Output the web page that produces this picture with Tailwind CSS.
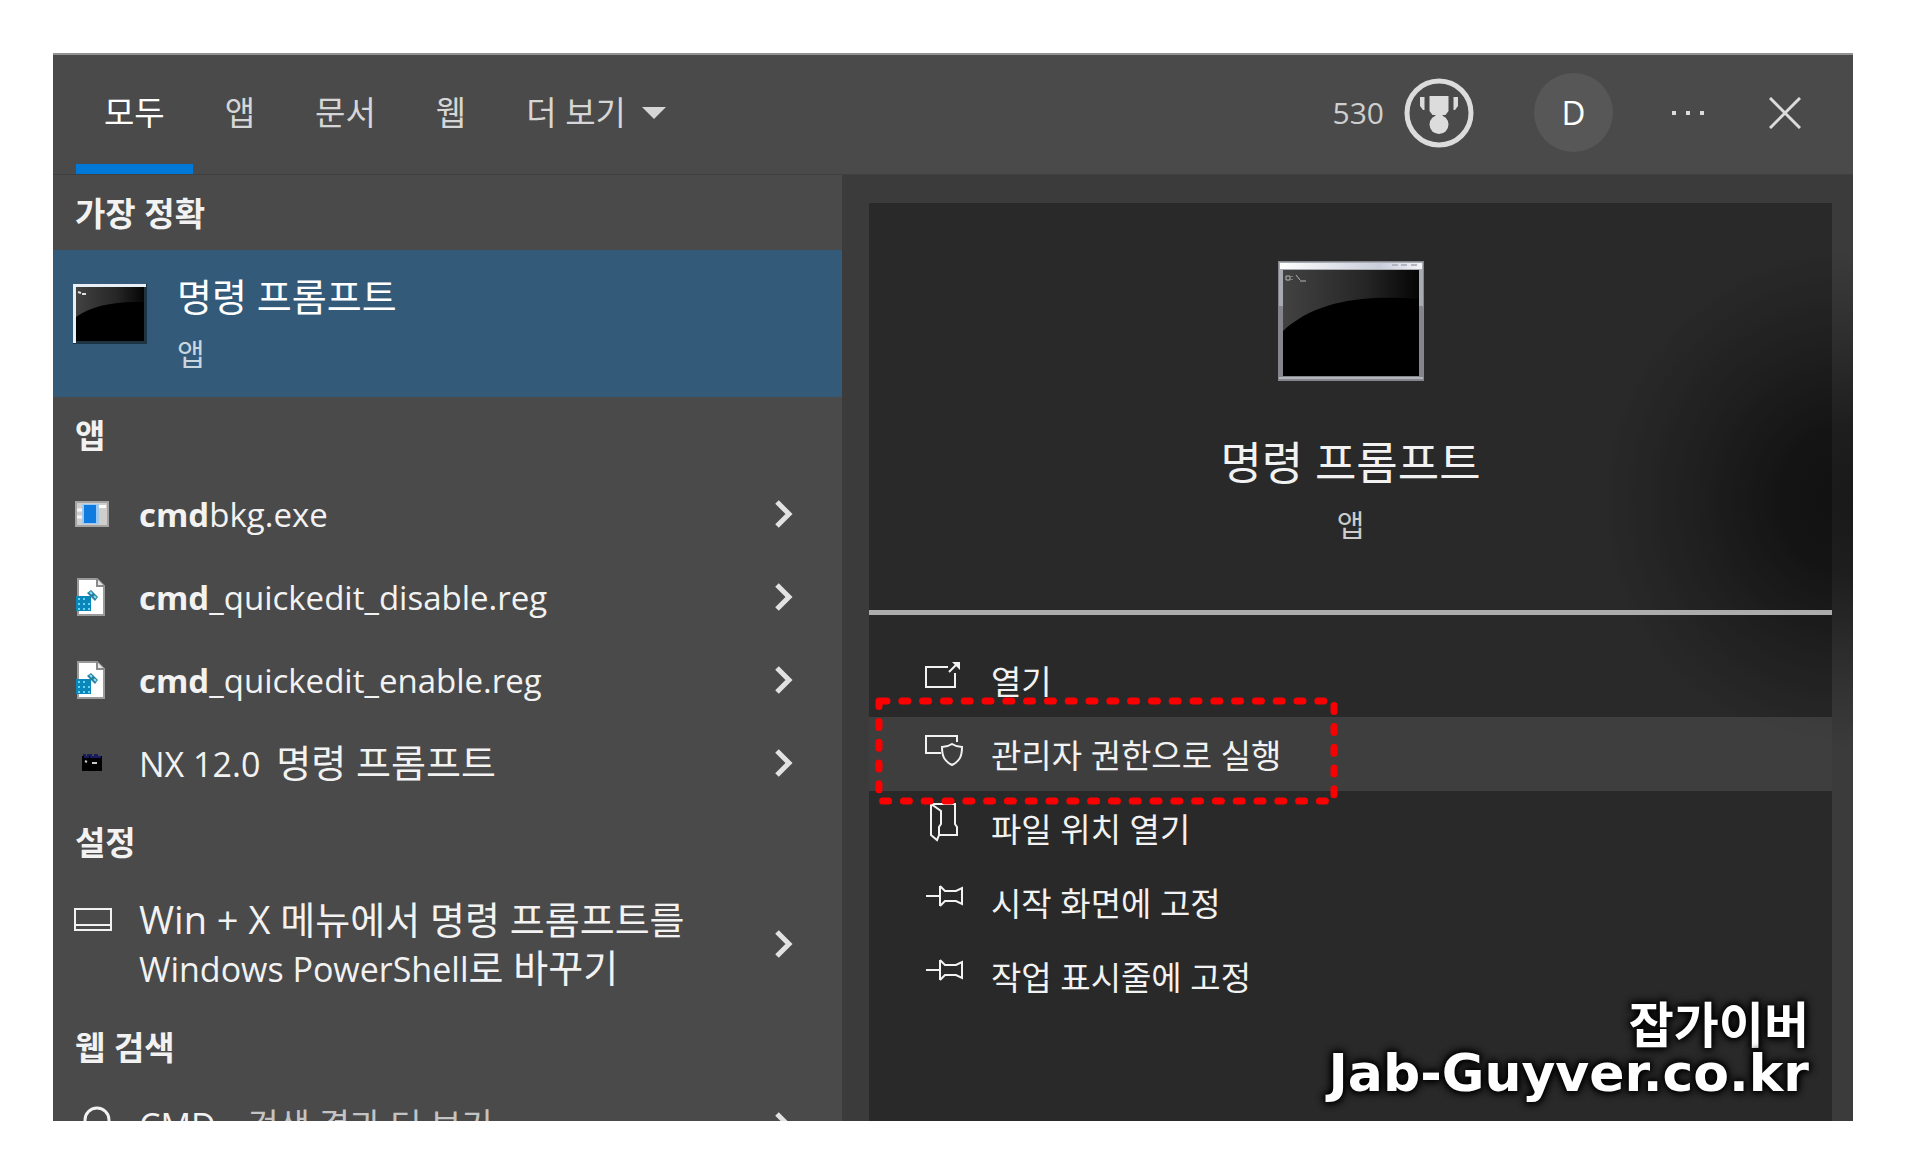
<!DOCTYPE html>
<html lang="ko">
<head>
    <meta charset="UTF-8">
    <meta name="viewport" content="width=device-width, initial-scale=1.0">
    <title>명령 프롬프트 - 검색</title>
    <script src="https://cdn.jsdelivr.net/npm/@tailwindcss/browser@4"></script>
    <style>
        body {
            font-family: 'Open Sans', 'Noto Sans CJK KR', sans-serif;
        }
        .watermark {
            font-family: 'DejaVu Sans', 'Noto Sans CJK KR', sans-serif;
            text-shadow: 0 0 6px #000, 0 0 8px #000, 0 0 10px #000;
        }
    </style>
</head>
<body class="bg-white h-screen p-[53px]">
    <div class="relative flex flex-col h-full overflow-hidden bg-[#4a4a4a] text-[#f2f2f2] border-t-2 border-[#929292]">

        <!-- 상단 탭 -->
        <header class="flex items-stretch justify-between h-[120px] shrink-0 border-b border-[#3f3f3f]">
            <nav class="flex gap-1 pl-[23px] text-[33px] text-[#d6d6d6]">
                <a href="#" class="flex items-center px-7 pt-1.5 border-b-10 border-[#0078d7] text-white">모두</a>
                <a href="#" class="flex items-center px-7 pt-1.5 border-b-10 border-transparent">앱</a>
                <a href="#" class="flex items-center px-7 pt-1.5 border-b-10 border-transparent">문서</a>
                <a href="#" class="flex items-center px-7 pt-1.5 border-b-10 border-transparent">웹</a>
                <button type="button" class="flex items-center gap-4 px-7 pt-1.5 border-b-10 border-transparent">
                    더 보기
                    <svg class="w-6 h-3" viewBox="0 0 24 12" fill="currentColor"><path d="M0 0h24L12 12z"/></svg>
                </button>
            </nav>
            <div class="flex items-center pb-1 pr-[52px] text-[#dcdcdc]">
                <span class="text-[30px] text-[#cfcfcf]">530</span>
                <button type="button" aria-label="리워드" class="ml-5">
                    <svg class="size-[70px]" viewBox="0 0 70 70" fill="currentColor">
                        <circle cx="35" cy="35" r="32" fill="none" stroke="currentColor" stroke-width="5"/>
                        <path d="M25.500 18h19v15l-3 4h-3v2h-7v-2h-3l-3-4z"/>
                        <circle cx="35" cy="46.500" r="9.500"/>
                        <path d="M16 19h4.500v13H19l-3-4zM49.500 19H54v9l-3 4h-1.500z"/>
                    </svg>
                </button>
                <button type="button" class="flex items-center justify-center ml-[60px] size-[79px] rounded-full bg-[#575757] text-[33px] text-white">D</button>
                <button type="button" aria-label="옵션" class="ml-[58px]">
                    <svg class="w-9 h-2" viewBox="0 0 36 8" fill="currentColor"><path d="M1 2h4v4H1zM15 2h4v4h-4zM29 2h4v4h-4z"/></svg>
                </button>
                <button type="button" aria-label="닫기" class="ml-[62px]">
                    <svg class="size-8" viewBox="0 0 32 32" fill="none" stroke="currentColor" stroke-width="3"><path d="M1 1l30 30M31 1L1 31"/></svg>
                </button>
            </div>
        </header>

        <div class="grid grid-cols-[789fr_1011fr] grow min-h-0">

            <!-- 검색 결과 목록 -->
            <section class="min-w-0">
                <h2 class="flex items-center h-[75px] px-[22px] pt-0.5 text-[33px] font-bold">가장 정확</h2>
                <a href="#" class="flex items-center gap-[30px] h-[147px] px-5 bg-[#335a78]">
                    <svg class="w-[74px] h-[60px] mb-5" viewBox="0 0 74 60">
                        <path d="M0 0h74v60H0z" fill="#1f3442"/>
                        <path d="M0 0h73v3H3v56H0z" fill="#e9eff4"/>
                        <path d="M3 3h68v54H3z" fill="#000"/>
                        <path d="M3 3h68v15C40 17 18 22 3 33z" fill="url(#gloss)"/>
                        <path d="M5 8l3 1m1 1h4" stroke="#ddd" stroke-width="2"/>
                    </svg>
                    <span class="flex flex-col gap-3">
                        <span class="text-[38px] leading-12 text-white">명령 프롬프트</span>
                        <span class="text-[30px] leading-11 text-[#c9d6e0]">앱</span>
                    </span>
                </a>

                <h2 class="flex items-center h-[75px] px-[22px] pt-0.5 text-[33px] font-bold">앱</h2>
                <ul class="text-[33px]">
                    <li>
                        <a href="#" class="flex items-center h-[83px] pl-[22px] pr-12">
                            <span class="w-16 shrink-0">
                                <svg class="w-[34px] h-[26px]" viewBox="0 0 34 26">
                                    <path d="M1 1h32v24H1z" fill="#d0cecb" stroke="#a3a3a3" stroke-width="2"/>
                                    <path d="M2 9h6M2 16h6" stroke="#f5f5f5" stroke-width="3"/>
                                    <path d="M7 3h17v20H7z" fill="#9cc9f2"/>
                                    <path d="M9 4h12v18H9z" fill="#0f7be0"/>
                                    <path d="M24 4h7v3h-7z" fill="#fff"/>
                                </svg>
                            </span>
                            <span class="grow pt-0.5"><b>cmd</b>bkg.exe</span>
                            <svg class="w-5 h-7" viewBox="0 0 20 28" fill="none" stroke="#e2e2e2" stroke-width="5"><path d="M3 2l12 12L3 26"/></svg>
                        </a>
                    </li>
                    <li>
                        <a href="#" class="flex items-center h-[83px] pl-[22px] pr-12">
                            <span class="w-16 shrink-0">
                                <svg class="w-[34px] h-[38px]" viewBox="0 0 34 38">
                                    <path d="M3 1h19l7 7v29H3z" fill="#fff" stroke="#9a9a9a" stroke-width="2"/>
                                    <path d="M22 1v7h7" fill="#e8e8e8" stroke="#8a8a8a" stroke-width="2"/>
                                    <path d="M1 18h15v15H1z" fill="#0a86b8"/>
                                    <path d="M3 20h2v2H3zM8 20h2v2H8zM3 25h2v2H3zM8 25h2v2H8zM13 25h2v2h-2zM3 30h2v2H3zM8 30h2v2H8zM13 30h2v2h-2z" fill="#5fd6f5"/>
                                    <path d="M12 15l4-3 7 7-3 4z" fill="#2b7f9e"/>
                                    <path d="M15 14l2 2M19 18l2 2" stroke="#7fe0f5" stroke-width="2"/>
                                </svg>
                            </span>
                            <span class="grow pt-0.5"><b>cmd</b>_quickedit_disable.reg</span>
                            <svg class="w-5 h-7" viewBox="0 0 20 28" fill="none" stroke="#e2e2e2" stroke-width="5"><path d="M3 2l12 12L3 26"/></svg>
                        </a>
                    </li>
                    <li>
                        <a href="#" class="flex items-center h-[83px] pl-[22px] pr-12">
                            <span class="w-16 shrink-0">
                                <svg class="w-[34px] h-[38px]" viewBox="0 0 34 38">
                                    <path d="M3 1h19l7 7v29H3z" fill="#fff" stroke="#9a9a9a" stroke-width="2"/>
                                    <path d="M22 1v7h7" fill="#e8e8e8" stroke="#8a8a8a" stroke-width="2"/>
                                    <path d="M1 18h15v15H1z" fill="#0a86b8"/>
                                    <path d="M3 20h2v2H3zM8 20h2v2H8zM3 25h2v2H3zM8 25h2v2H8zM13 25h2v2h-2zM3 30h2v2H3zM8 30h2v2H8zM13 30h2v2h-2z" fill="#5fd6f5"/>
                                    <path d="M12 15l4-3 7 7-3 4z" fill="#2b7f9e"/>
                                    <path d="M15 14l2 2M19 18l2 2" stroke="#7fe0f5" stroke-width="2"/>
                                </svg>
                            </span>
                            <span class="grow pt-0.5"><b>cmd</b>_quickedit_enable.reg</span>
                            <svg class="w-5 h-7" viewBox="0 0 20 28" fill="none" stroke="#e2e2e2" stroke-width="5"><path d="M3 2l12 12L3 26"/></svg>
                        </a>
                    </li>
                    <li>
                        <a href="#" class="flex items-center h-[83px] pl-[22px] pr-12">
                            <span class="w-16 shrink-0">
                                <svg class="w-[34px] h-[18px]" viewBox="0 0 34 18">
                                    <path d="M7 2h20v15H7z" fill="#000"/>
                                    <path d="M8 1h2v2h3V1h3v2h4V1h2v2h4" fill="none" stroke="#1a1a5e" stroke-width="2"/>
                                    <path d="M10 7l2 1M17 9h5" stroke="#c8c8c8" stroke-width="2"/>
                                </svg>
                            </span>
                            <span class="flex items-baseline gap-4 grow text-[34px]">NX 12.0 <span class="text-[38px]">명령 프롬프트</span></span>
                            <svg class="w-5 h-7" viewBox="0 0 20 28" fill="none" stroke="#e2e2e2" stroke-width="5"><path d="M3 2l12 12L3 26"/></svg>
                        </a>
                    </li>
                </ul>

                <h2 class="flex items-center h-[75px] px-[22px] pt-0.5 text-[33px] font-bold">설정</h2>
                <a href="#" class="flex items-center h-[130px] pl-5 pr-12">
                    <span class="w-[66px] shrink-0 pb-12">
                        <svg class="w-10 h-6" viewBox="0 0 40 24" fill="none" stroke="currentColor" stroke-width="2"><path d="M2 1h36v21H2zM2 17h36"/></svg>
                    </span>
                    <span class="grow text-[38px] leading-12">Win + X 메뉴에서 명령 프롬프트를<br><span class="text-[34px]">Windows PowerShell</span>로 바꾸기</span>
                    <svg class="w-5 h-7" viewBox="0 0 20 28" fill="none" stroke="#e2e2e2" stroke-width="5"><path d="M3 2l12 12L3 26"/></svg>
                </a>

                <h2 class="flex items-center h-[75px] px-[22px] pt-0.5 text-[33px] font-bold">웹 검색</h2>
                <a href="#" class="flex items-center h-[83px] pl-[22px] pr-12 text-[34px]">
                    <span class="w-16 shrink-0">
                        <svg class="w-9 h-10" viewBox="0 0 36 40" fill="none" stroke="currentColor" stroke-width="3"><circle cx="22" cy="14" r="12"/><path d="M14 23L2 37"/></svg>
                    </span>
                    <span class="flex items-baseline gap-3 grow">CMD <span class="text-[#c4c4c4]">- 검색 결과 더 보기</span></span>
                    <svg class="w-5 h-7" viewBox="0 0 20 28" fill="none" stroke="#e2e2e2" stroke-width="5"><path d="M3 2l12 12L3 26"/></svg>
                </a>
            </section>

            <!-- 상세 정보 -->
            <section class="flex flex-col min-w-0 pt-7 pl-[27px] pr-[21px] bg-[#3b3b3b] bg-[radial-gradient(250px_250px_at_100%_325px,#191919_0%,#1e1e1e_30%,#303030_70%,#3b3b3b_100%)]">
                <div class="grow bg-black/30">
                    <div class="flex flex-col items-center pt-[58px] pb-[65px] border-b-5 border-[#acacac]">
                        <svg class="w-[146px] h-[120px]" viewBox="0 0 146 120">
                            <defs>
                                <linearGradient id="gloss" x1="0" y1="0" x2="1" y2="0">
                                    <stop offset="0" stop-color="#424242"/>
                                    <stop offset="0.600" stop-color="#262626"/>
                                    <stop offset="1" stop-color="#050505"/>
                                </linearGradient>
                                <linearGradient id="bar" x1="0" y1="0" x2="1" y2="0">
                                    <stop offset="0" stop-color="#ffffff"/>
                                    <stop offset="0.700" stop-color="#c9cddb"/>
                                    <stop offset="1" stop-color="#f4f4f8"/>
                                </linearGradient>
                            </defs>
                            <path d="M0 0h146v120H0z" fill="#85868d"/>
                            <path d="M1 1h144v44H1z" fill="#a9abb3"/>
                            <path d="M2 2h142v6H2z" fill="url(#bar)"/>
                            <path d="M114 4h6m3 0h6m4 0h6" stroke="#b4b6c2" stroke-width="2"/>
                            <path d="M5 9h136v106H5z" fill="#000"/>
                            <path d="M5 9h136v29C80 33 35 42 5 70z" fill="url(#gloss)"/>
                            <path d="M8 15h4v4H8zM14 15v1m0 2v1M18 14l4 5M22 20h6" fill="none" stroke="#b5b5b5" stroke-width="1"/>
                            <path d="M1 117h144" stroke="#b4b5bb" stroke-width="2"/>
                        </svg>
                        <h1 class="mt-[52px] text-[45px] leading-[60px]">명령 프롬프트</h1>
                        <p class="mt-3 text-[30px] leading-10 text-[#cccccc]">앱</p>
                    </div>

                    <ul class="pt-7 text-[33px]">
                        <li>
                            <a href="#" class="flex items-center gap-7 h-[74px] pt-1 pl-14">
                                <svg class="w-[38px] h-10 mb-4" viewBox="0 0 38 40" fill="none" stroke="currentColor" stroke-width="2"><path d="M23 13H1v20h29V19M24 18l9-9"/><path d="M27 8h8v8z" fill="currentColor" stroke="none"/></svg>
                                열기
                            </a>
                        </li>
                        <li class="relative">
                            <a href="#" class="flex items-center gap-7 h-[74px] pt-1 pl-14 bg-white/10">
                                <svg class="w-[38px] h-10 mb-4" viewBox="0 0 38 40" fill="none" stroke="currentColor" stroke-width="2"><path d="M16 25H1V8h31v6"/><path d="M27 16c3 2 6 3 10 3 0 9-2 14-10 18-8-4-10-9-10-18 4 0 7-1 10-3z"/></svg>
                                관리자 권한으로 실행
                            </a>
                            <!-- 강조 표시 -->
                            <svg class="absolute z-10 left-1.5 -top-5 w-[464px] h-[108px] pointer-events-none" viewBox="0 0 464 108" fill="none" stroke="#fb0000" stroke-width="7" stroke-linecap="round" stroke-dasharray="6 14.800"><path d="M6 4h453v100H4V4"/></svg>
                        </li>
                        <li>
                            <a href="#" class="flex items-center gap-7 h-[74px] pt-1 pl-14">
                                <svg class="w-[38px] h-10 mb-4" viewBox="0 0 38 40" fill="none" stroke="currentColor" stroke-width="2"><path d="M6 2h24v20l2 3v8H14"/><path d="M6 2v31l6 5 2-5V25l2-3V9z"/></svg>
                                파일 위치 열기
                            </a>
                        </li>
                        <li>
                            <a href="#" class="flex items-center gap-7 h-[74px] pt-1 pl-14">
                                <svg class="w-[38px] h-10 mb-4" viewBox="0 0 38 40" fill="none" stroke="currentColor" stroke-width="2"><path d="M1 20h13M15 10v20M15 10l5 5h11l6-3v16l-6-3H20l-5 5"/></svg>
                                시작 화면에 고정
                            </a>
                        </li>
                        <li>
                            <a href="#" class="flex items-center gap-7 h-[74px] pt-1 pl-14">
                                <svg class="w-[38px] h-10 mb-4" viewBox="0 0 38 40" fill="none" stroke="currentColor" stroke-width="2"><path d="M1 20h13M15 10v20M15 10l5 5h11l6-3v16l-6-3H20l-5 5"/></svg>
                                작업 표시줄에 고정
                            </a>
                        </li>
                    </ul>
                </div>
            </section>
        </div>

        <!-- 워터마크 -->
        <div class="watermark absolute right-11 bottom-6 text-right font-bold text-white">
            <p class="text-[49px] leading-11">잡가이버</p>
            <p class="text-[52px] leading-12">Jab-Guyver.co.kr</p>
        </div>
    </div>
</body>
</html>
